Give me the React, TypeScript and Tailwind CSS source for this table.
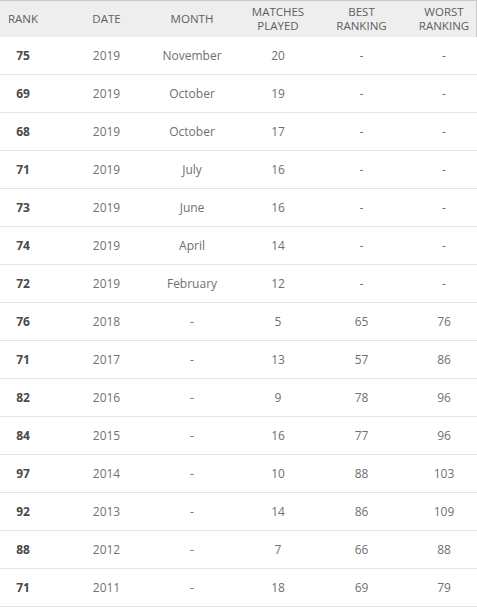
const rows = [
  { rank: 75, date: 2019, month: 'November', played: 20, best: '-', worst: '-' },
  { rank: 69, date: 2019, month: 'October', played: 19, best: '-', worst: '-' },
  { rank: 68, date: 2019, month: 'October', played: 17, best: '-', worst: '-' },
  { rank: 71, date: 2019, month: 'July', played: 16, best: '-', worst: '-' },
  { rank: 73, date: 2019, month: 'June', played: 16, best: '-', worst: '-' },
  { rank: 74, date: 2019, month: 'April', played: 14, best: '-', worst: '-' },
  { rank: 72, date: 2019, month: 'February', played: 12, best: '-', worst: '-' },
  { rank: 76, date: 2018, month: '-', played: 5, best: '65', worst: '76' },
  { rank: 71, date: 2017, month: '-', played: 13, best: '57', worst: '86' },
  { rank: 82, date: 2016, month: '-', played: 9, best: '78', worst: '96' },
  { rank: 84, date: 2015, month: '-', played: 16, best: '77', worst: '96' },
  { rank: 97, date: 2014, month: '-', played: 10, best: '88', worst: '103' },
  { rank: 92, date: 2013, month: '-', played: 14, best: '86', worst: '109' },
  { rank: 88, date: 2012, month: '-', played: 7, best: '66', worst: '88' },
  { rank: 71, date: 2011, month: '-', played: 18, best: '69', worst: '79' },
]

const grid = 'grid grid-cols-[64px_85px_86px_84px_83px_75px]'
const cell = 'flex items-center justify-center whitespace-nowrap'

export default function App() {
  return (
    <div className="w-[477px] bg-white" style={{ fontFamily: '"Open Sans", sans-serif' }}>
      {/* header */}
      <div className={`${grid} h-[37px] bg-[#eeeeee] border-t border-r border-[#c8c8c8] text-[11.5px] leading-[14px] text-[#5e5e5e] text-center uppercase`}>
        <div className={`${cell} pr-[18px]`}>Rank</div>
        <div className={cell}>Date</div>
        <div className={cell}>Month</div>
        <div className={`${cell} pl-[2px]`}>Matches<br />Played</div>
        <div className={`${cell} pl-[2px]`}>Best<br />Ranking</div>
        <div className={`${cell} pl-[9px]`}>Worst<br />Ranking</div>
      </div>

      {rows.map((r, i) => (
        <div
          key={i}
          className={`${grid} h-[38px] border-b border-[#e6e6e6] text-[12px] text-[#707070]`}
        >
          <div className={`${cell} pr-[18px] font-bold text-[#4a4a4a]`}>{r.rank}</div>
          <div className={cell}>{r.date}</div>
          <div className={cell}>{r.month}</div>
          <div className={`${cell} pl-[2px]`}>{r.played}</div>
          <div className={`${cell} pl-[2px]`}>{r.best}</div>
          <div className={`${cell} pl-[9px]`}>{r.worst}</div>
        </div>
      ))}
    </div>
  )
}
